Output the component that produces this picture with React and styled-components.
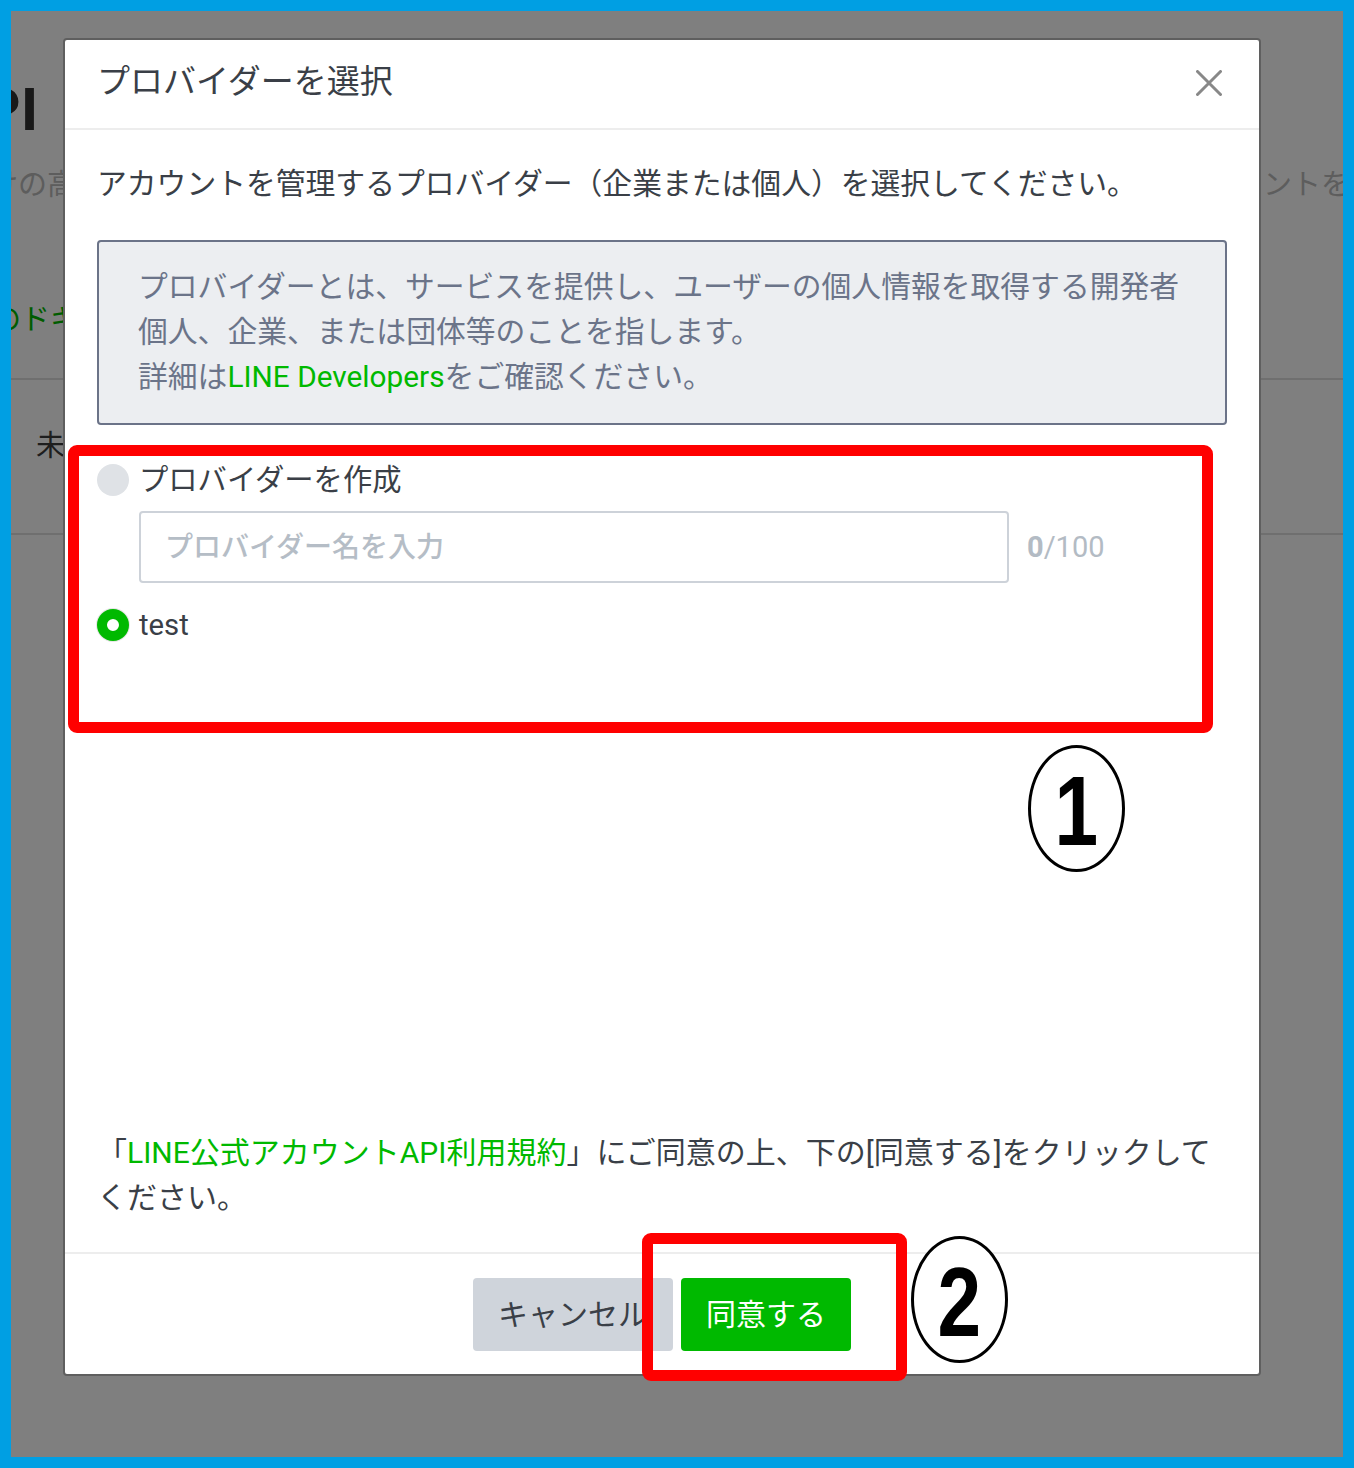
import styled, { createGlobalStyle } from "styled-components";

const GlobalStyle = createGlobalStyle`
  html, body {
    margin: 0;
    padding: 0;
  }
  body {
    font-family: Roboto, "Noto Sans CJK JP", sans-serif;
  }
  * {
    box-sizing: border-box;
  }
`;

function CloseIcon() {
  return (
    <svg width="26" height="26" viewBox="0 0 26 26">
      <path d="M1.5 1.5 L24.5 24.5 M24.5 1.5 L1.5 24.5" stroke="#888" strokeWidth="3" strokeLinecap="round" />
    </svg>
  );
}

function App() {
  return (
    <Frame>
      <GlobalStyle />
      <Page>
        <BgTitle>PI</BgTitle>
        <BgRow>
          <BgText $offset="-22px">けの高い</BgText>
          <BgText $offset="-7px" $right>アカウントを</BgText>
        </BgRow>
        <BgLink>のドキュメント</BgLink>
        <BgDivider $gap="36px" />
        <BgCell>未設定</BgCell>
        <BgDivider $gap="65px" />

        <Overlay>
          <Modal>
            <ModalHeader>
              <Title>プロバイダーを選択</Title>
              <CloseButton aria-label="close">
                <CloseIcon />
              </CloseButton>
            </ModalHeader>

            <ModalBody>
              <Lead>アカウントを管理するプロバイダー（企業または個人）を選択してください。</Lead>
              <InfoBox>
                プロバイダーとは、サービスを提供し、ユーザーの個人情報を取得する開発者
                <br />
                個人、企業、または団体等のことを指します。
                <br />
                詳細は<Link href="#">LINE Developers</Link>をご確認ください。
              </InfoBox>

              <RadioList>
                <RadioRow>
                  <RadioMark />
                  <RadioLabel>プロバイダーを作成</RadioLabel>
                </RadioRow>
                <NameField>
                  <NameInput placeholder="プロバイダー名を入力" />
                  <Counter>
                    <strong>0</strong>/100
                  </Counter>
                </NameField>
                <RadioRow $gap="20px">
                  <RadioMark $checked />
                  <RadioLabel>test</RadioLabel>
                </RadioRow>
              </RadioList>

              <Terms>
                「<Link href="#">LINE公式アカウントAPI利用規約</Link>」にご同意の上、下の[同意する]をクリックして
                <br />
                ください。
              </Terms>
            </ModalBody>

            <ModalFooter>
              <Button>キャンセル</Button>
              <Button $primary>同意する</Button>
            </ModalFooter>
          </Modal>
        </Overlay>
      </Page>

      <MarkBox $x="68px" $y="445px" $w="1145px" $h="288px" />
      <MarkBox $x="642px" $y="1233px" $w="265px" $h="148px" />
      <Circled $x="1028px" $y="745px">
        <span>1</span>
      </Circled>
      <Circled $x="911px" $y="1236px">
        <span>2</span>
      </Circled>
    </Frame>
  );
}

export default App;

const Frame = styled.div`
  position: relative;
  width: 1354px;
  height: 1468px;
  padding: 11px;
  background: #009fe3;
`;

const Page = styled.div`
  position: relative;
  height: 100%;
  overflow: hidden;
  background: #fff;
  display: flex;
  flex-direction: column;
`;

const BgTitle = styled.div`
  margin: 69px 0 0 -29px;
  font-size: 60px;
  line-height: 60px;
  font-weight: 700;
  color: #333;
`;

const BgRow = styled.div`
  display: flex;
  justify-content: space-between;
  margin-top: 23px;
  font-size: 29px;
  line-height: 44px;
  color: #bbb;
  white-space: nowrap;
`;

const BgText = styled.span`
  ${({ $right, $offset }) => ($right ? `margin-right: ${$offset};` : `margin-left: ${$offset};`)}
`;

const BgLink = styled.div`
  margin: 91px 0 0 -19px;
  font-size: 29px;
  line-height: 44px;
  color: #00b900;
`;

const BgDivider = styled.div`
  margin-top: ${({ $gap }) => $gap};
  height: 2px;
  background: #dedede;
`;

const BgCell = styled.div`
  margin: 44px 0 0 25px;
  font-size: 29px;
  line-height: 44px;
  color: #3c3c3c;
`;

const Overlay = styled.div`
  position: absolute;
  inset: 0;
  padding: 27px 0 0 52px;
  background: rgba(0, 0, 0, 0.5);
`;

const Modal = styled.div`
  width: 1198px;
  height: 1338px;
  display: flex;
  flex-direction: column;
  background: #fff;
  border: 2px solid #5f5f5f;
  border-radius: 4px;
  overflow: hidden;
`;

const ModalHeader = styled.div`
  height: 90px;
  flex: none;
  display: flex;
  justify-content: space-between;
  align-items: flex-start;
  padding: 19px 37px 0 32px;
  border-bottom: 2px solid #ededed;
`;

const Title = styled.h2`
  margin: 0;
  font-size: 33px;
  line-height: 46px;
  font-weight: 400;
  color: #3a3f47;
`;

const CloseButton = styled.button`
  margin-top: 11px;
  width: 26px;
  height: 26px;
  padding: 0;
  border: none;
  background: none;
  cursor: pointer;
  > svg {
    display: block;
  }
`;

const ModalBody = styled.div`
  flex: 1;
  display: flex;
  flex-direction: column;
  padding: 32px;
`;

const Lead = styled.p`
  margin: 0;
  font-size: 29.8px;
  line-height: 44px;
  color: #3a3f47;
  white-space: nowrap;
`;

const InfoBox = styled.div`
  margin-top: 34px;
  padding: 22px 30px 24px 39px;
  border: 2px solid #6b7388;
  border-radius: 4px;
  background: #eceef1;
  color: #6b7489;
  font-size: 29.8px;
  line-height: 45px;
  white-space: nowrap;
`;

const Link = styled.a`
  color: #00b900;
  text-decoration: none;
`;

const RadioList = styled.div`
  margin-top: 33px;
  display: flex;
  flex-direction: column;
`;

const RadioRow = styled.label`
  display: flex;
  align-items: center;
  height: 44px;
  margin-top: ${({ $gap }) => $gap || "0"};
  cursor: pointer;
`;

const RadioMark = styled.span`
  flex: none;
  width: 32px;
  height: 32px;
  border-radius: 50%;
  background: ${({ $checked }) => ($checked ? "#fff" : "#dfe2e6")};
  border: ${({ $checked }) => ($checked ? "10.5px solid #00b900" : "none")};
  box-shadow: ${({ $checked }) => ($checked ? "0 0 0 1px #e6e6e6" : "none")};
`;

const RadioLabel = styled.span`
  margin-left: 10px;
  font-size: 29.3px;
  line-height: 44px;
  color: #3a3f47;
`;

const NameField = styled.div`
  display: flex;
  align-items: center;
  gap: 18px;
  margin: 9px 0 0 42px;
`;

const NameInput = styled.input`
  width: 870px;
  height: 72px;
  padding: 0 24px;
  border: 2px solid #cdd2d9;
  border-radius: 4px;
  font-family: inherit;
  font-size: 28px;
  font-weight: 500;
  color: #3a3f47;
  outline: none;
  &::placeholder {
    color: #b5bdc6;
  }
`;

const Counter = styled.span`
  font-size: 29px;
  color: #b3bbc4;
  strong {
    font-weight: 700;
  }
`;

const Terms = styled.p`
  margin: auto 0 0;
  font-size: 30px;
  line-height: 45px;
  color: #3a3f47;
  white-space: nowrap;
`;

const ModalFooter = styled.div`
  flex: none;
  display: flex;
  justify-content: center;
  gap: 8px;
  padding: 24px 0 23px;
  border-top: 2px solid #ededed;
`;

const Button = styled.button`
  height: 73px;
  padding: 0 25px 6px;
  border: none;
  border-radius: 4px;
  font-family: inherit;
  font-size: 30px;
  cursor: pointer;
  background: ${({ $primary }) => ($primary ? "#00b900" : "#cfd4db")};
  color: ${({ $primary }) => ($primary ? "#fff" : "#3a3f47")};
`;

const MarkBox = styled.div`
  position: absolute;
  left: ${({ $x }) => $x};
  top: ${({ $y }) => $y};
  width: ${({ $w }) => $w};
  height: ${({ $h }) => $h};
  border: 11px solid #ff0000;
  border-radius: 9px;
  pointer-events: none;
`;

const Circled = styled.div`
  position: absolute;
  left: ${({ $x }) => $x};
  top: ${({ $y }) => $y};
  width: 97px;
  height: 127px;
  display: flex;
  align-items: center;
  justify-content: center;
  border: 3.5px solid #000;
  border-radius: 50%;
  background: #fff;
  font-family: "Liberation Sans", Arial, sans-serif;
  font-weight: 700;
  font-size: 98px;
  line-height: 1;
  color: #000;
  > span {
    display: block;
    transform: scaleX(0.8);
    margin-top: 4px;
  }
`;
